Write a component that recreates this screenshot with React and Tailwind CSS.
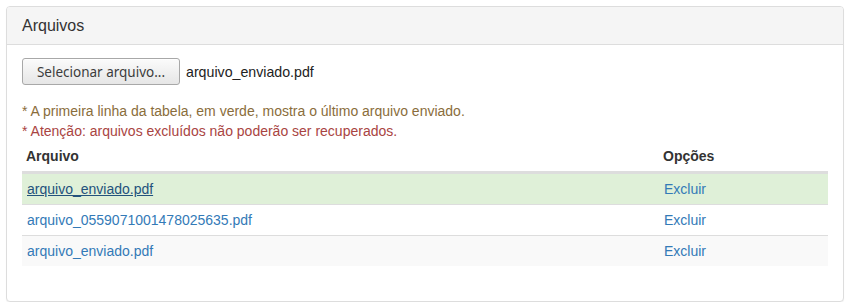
import React from 'react'

const files = [
    { name: 'arquivo_enviado.pdf', latest: true },
    { name: 'arquivo_0559071001478025635.pdf' },
    { name: 'arquivo_enviado.pdf' },
]

function App() {
    return (
        <div className="pt-[6px] pl-[6px] font-['Liberation_Sans',Arial,sans-serif] text-[14px] leading-[20px] text-[#333]">
            <div className="w-[838px] rounded-[4px] border border-[#ddd] bg-white shadow-[0_1px_1px_rgba(0,0,0,0.05)]">
                <div className="h-[38px] rounded-t-[3px] border-b border-[#ddd] bg-[#f5f5f5] px-[15px] flex items-center">
                    <h3 className="text-[16px] leading-[18px] text-[#333]">Arquivos</h3>
                </div>
                <div className="px-[15px] pt-[13px] pb-[35px]">
                    <div className="flex items-center h-[27px]">
                        <button className="h-[27px] w-[158px] rounded-[3px] border border-[#a8a8a8] bg-gradient-to-b from-[#fbfbfb] to-[#e6e6e6] font-['Noto_Sans',sans-serif] text-[13.5px] text-[#3c3c3c] shadow-[inset_0_1px_0_rgba(255,255,255,0.8)]">
                            Selecionar arquivo...
                        </button>
                        <span className="ml-[6px] text-[14.2px] text-[#222]">arquivo_enviado.pdf</span>
                    </div>

                    <div className="mt-[16px]">
                        <p className="text-[#8a6d3b]">* A primeira linha da tabela, em verde, mostra o último arquivo enviado.</p>
                        <p className="text-[#a94442]">* Atenção: arquivos excluídos não poderão ser recuperados.</p>
                    </div>

                    <div className="w-[806px]">
                        <div className="grid grid-cols-[637px_1fr] border-b-2 border-[#ddd] font-bold">
                            <div className="py-[5px] pl-[4px] pr-[5px]">Arquivo</div>
                            <div className="py-[5px] pl-[4px] pr-[5px]">Opções</div>
                        </div>
                        {files.map((f, i) => (
                            <div
                                key={i}
                                className={
                                    'grid grid-cols-[637px_1fr] border-t border-[#ddd] ' +
                                    (f.latest ? 'bg-[#dff0d8]' : i % 2 === 0 ? 'bg-[#f9f9f9]' : 'bg-white')
                                }
                            >
                                <div className="p-[5px]">
                                    <a href="#" className={f.latest ? 'text-[#23527c] underline' : 'text-[#337ab7]'}>
                                        {f.name}
                                    </a>
                                </div>
                                <div className="p-[5px]">
                                    <a href="#" className="text-[#337ab7]">Excluir</a>
                                </div>
                            </div>
                        ))}
                    </div>
                </div>
            </div>
        </div>
    )
}

export default App
